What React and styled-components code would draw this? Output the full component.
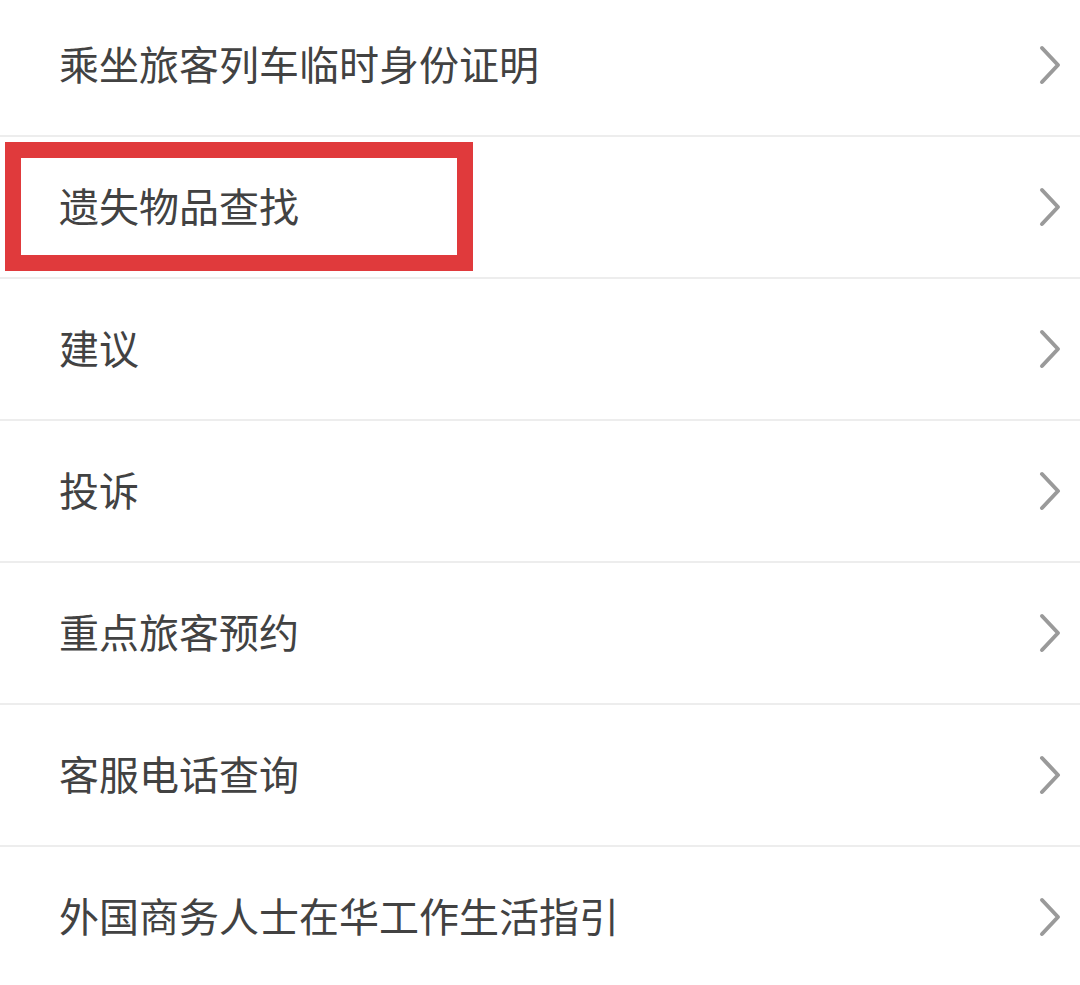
import React from 'react';
import styled, { createGlobalStyle } from 'styled-components';

const GlobalStyle = createGlobalStyle`
    html, body {
        margin: 0;
        padding: 0;
        background: #ffffff;
    }
    body {
        font-family: "Noto Sans CJK SC", "Noto Sans", sans-serif;
        overflow: hidden;
    }
`;

const items = [
    '乘坐旅客列车临时身份证明',
    '遗失物品查找',
    '建议',
    '投诉',
    '重点旅客预约',
    '客服电话查询',
    '外国商务人士在华工作生活指引',
];

const Chevron = () => (
    <svg width="24" height="40" viewBox="0 0 24 40" fill="none">
        <path
            d="M4 3 L20 20 L4 37"
            stroke="#9a9a9a"
            strokeWidth="4"
            strokeLinecap="round"
            strokeLinejoin="round"
        />
    </svg>
);

const App = () => {
    return (
        <>
            <GlobalStyle />
            <Page>
                <List>
                    {items.map((label, i) => (
                        <Row key={label}>
                            {i === 1 && <Highlight />}
                            <Label>{label}</Label>
                            <Chevron />
                        </Row>
                    ))}
                </List>
            </Page>
        </>
    );
};

export default App;

const Page = styled.div`
    width: 1080px;
    height: 985px;
    overflow: hidden;
    background: #ffffff;
`;

const List = styled.ul`
    list-style: none;
    margin: -5px 0 0;
    padding: 0;
`;

const Row = styled.li`
    position: relative;
    box-sizing: border-box;
    height: 142px;
    display: flex;
    align-items: center;
    justify-content: space-between;
    padding: 0 18px 0 59px;
    border-bottom: 2px solid #ededed;
`;

const Label = styled.span`
    font-size: 40px;
    line-height: 1;
    padding-bottom: 4px;
    color: #424242;
    white-space: nowrap;
`;

const Highlight = styled.div`
    position: absolute;
    left: 5px;
    top: 5px;
    width: 468px;
    height: 129px;
    box-sizing: border-box;
    border: 16px solid #e03a3c;
    pointer-events: none;
`;
